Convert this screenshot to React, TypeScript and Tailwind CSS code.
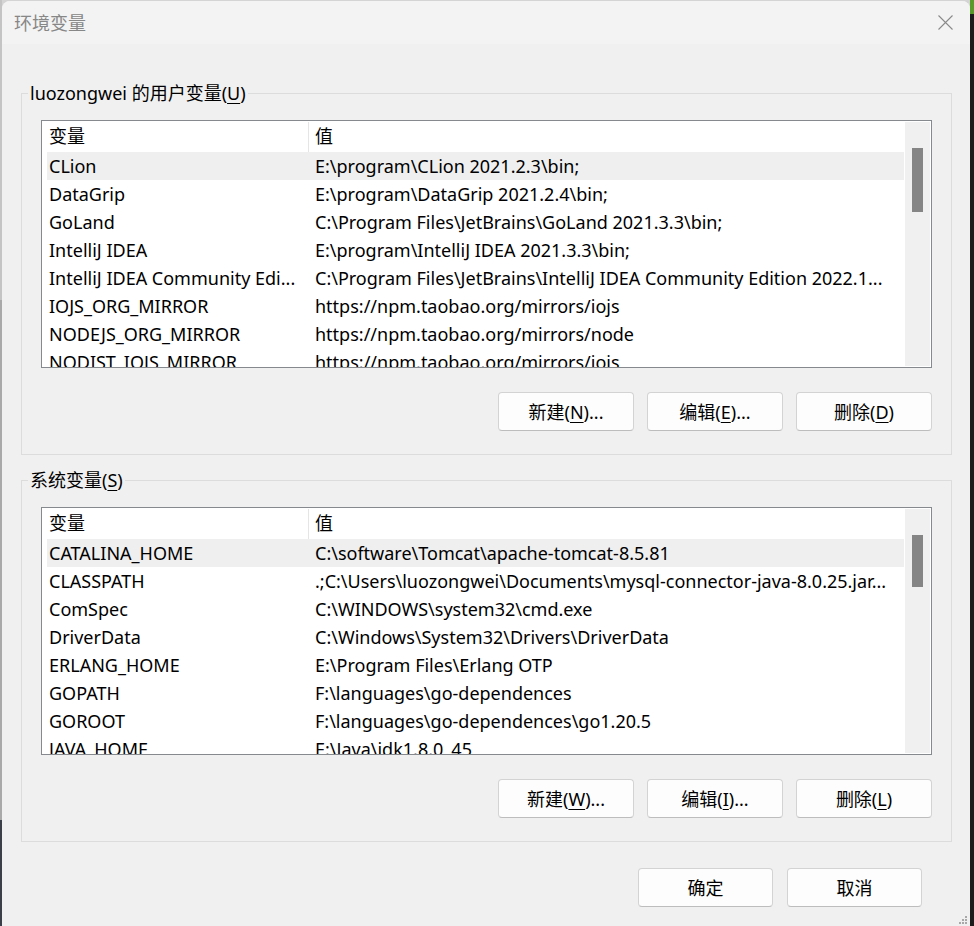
import React from "react";

const userRows: [string, string][] = [
  ["CLion", "E:\\program\\CLion 2021.2.3\\bin;"],
  ["DataGrip", "E:\\program\\DataGrip 2021.2.4\\bin;"],
  ["GoLand", "C:\\Program Files\\JetBrains\\GoLand 2021.3.3\\bin;"],
  ["IntelliJ IDEA", "E:\\program\\IntelliJ IDEA 2021.3.3\\bin;"],
  ["IntelliJ IDEA Community Edi...", "C:\\Program Files\\JetBrains\\IntelliJ IDEA Community Edition 2022.1..."],
  ["IOJS_ORG_MIRROR", "https://npm.taobao.org/mirrors/iojs"],
  ["NODEJS_ORG_MIRROR", "https://npm.taobao.org/mirrors/node"],
  ["NODIST_IOJS_MIRROR", "https://npm.taobao.org/mirrors/iojs"],
];

const sysRows: [string, string][] = [
  ["CATALINA_HOME", "C:\\software\\Tomcat\\apache-tomcat-8.5.81"],
  ["CLASSPATH", ".;C:\\Users\\luozongwei\\Documents\\mysql-connector-java-8.0.25.jar..."],
  ["ComSpec", "C:\\WINDOWS\\system32\\cmd.exe"],
  ["DriverData", "C:\\Windows\\System32\\Drivers\\DriverData"],
  ["ERLANG_HOME", "E:\\Program Files\\Erlang OTP"],
  ["GOPATH", "F:\\languages\\go-dependences"],
  ["GOROOT", "F:\\languages\\go-dependences\\go1.20.5"],
  ["JAVA_HOME", "E:\\Java\\jdk1.8.0_45"],
];

function Mn({ c }: { c: string }) {
  return <span className="underline underline-offset-[3px] decoration-1">{c}</span>;
}

function Btn({ children, className = "" }: { children: React.ReactNode; className?: string }) {
  return (
    <button
      className={`h-[39px] rounded-[4px] border border-[#d3d3d3] border-b-[#bdbdbd] bg-[#fdfdfd] text-[18px] leading-none text-black flex items-center justify-center ${className}`}
    >
      {children}
    </button>
  );
}

function ListView({ rows, thumbH }: { rows: [string, string][]; thumbH: string }) {
  return (
    <div className="h-[248px] border border-[#868a8f] bg-white flex overflow-hidden">
      <div className="w-[862px] pl-[5px] flex flex-col overflow-hidden">
        <div className="h-[31px] flex shrink-0">
          <div className="w-[261px] pl-[2px] flex items-center">变量</div>
          <div className="w-px bg-[#e5e5e5] mt-[1px]" />
          <div className="pl-[6px] flex items-center">值</div>
        </div>
        {rows.map((r, i) => (
          <div
            key={i}
            className={`h-[28px] shrink-0 flex items-center leading-[28px] ${i === 0 ? "bg-[#efefef]" : ""}`}
          >
            <div className="w-[262px] shrink-0 pl-[2px] whitespace-nowrap overflow-hidden">{r[0]}</div>
            <div className="pl-[6px] whitespace-nowrap overflow-hidden flex-1">{r[1]}</div>
          </div>
        ))}
      </div>
      <div className="w-[25px] my-[1px] ml-[1px] bg-[#f0f0f0] flex flex-col">
        <div className={`ml-[7px] mt-[26px] w-[11px] bg-[#858585] ${thumbH}`} />
      </div>
    </div>
  );
}

function Group({
  legend,
  rows,
  thumbH,
  buttons,
  className = "",
}: {
  legend: React.ReactNode;
  rows: [string, string][];
  thumbH: string;
  buttons: React.ReactNode[];
  className?: string;
}) {
  return (
    <fieldset className={`ml-[19px] w-[931px] min-w-0 border border-[#dcdcdc] pl-[6px] pr-[19px] pt-[15px] pb-[23px] ${className}`}>
      <legend className="px-[2px] text-[18px] leading-[23px] text-black">{legend}</legend>
      <div className="pl-[13px]">
        <ListView rows={rows} thumbH={thumbH} />
        <div className="mt-[24px] flex justify-end">
          <Btn className="w-[136px]">{buttons[0]}</Btn>
          <Btn className="w-[136px] ml-[13px]">{buttons[1]}</Btn>
          <Btn className="w-[136px] ml-[13px]">{buttons[2]}</Btn>
        </div>
      </div>
    </fieldset>
  );
}

export default function App() {
  return (
    <div className="w-[974px] h-[926px] overflow-hidden flex bg-[#d4d4d4] font-['Noto_Sans','Noto_Sans_CJK_SC',sans-serif] text-[18px] text-black">
      <div className="w-[2px] shrink-0 flex flex-col">
        <div className="h-[300px] bg-[#c4c4c4]" />
        <div className="h-[520px] bg-[#a9a9a9]" />
        <div className="flex-1 bg-[#3b4048]" />
      </div>
      <div className="relative mt-[1px] w-[968px] h-[925px] shrink-0 rounded-t-[8px] bg-[#f0f0f0] flex flex-col overflow-hidden">
        <div className="h-[43px] shrink-0 bg-[#f3f3f3] flex items-center pl-[12px]">
          <span className="text-[18px] text-[#878787] leading-none">环境变量</span>
          <div className="ml-auto mr-[17px] w-[15px] h-[15px]">
            <svg width="15" height="15" viewBox="0 0 15 15">
              <path d="M0.5 0.5 L14.5 14.5 M14.5 0.5 L0.5 14.5" stroke="#8a8a8a" strokeWidth="1.1" fill="none" />
            </svg>
          </div>
        </div>
        <Group
          className="mt-[38px]"
          legend={
            <>
              luozongwei 的用户变量(<Mn c="U" />)
            </>
          }
          rows={userRows}
          thumbH="h-[64px]"
          buttons={[
            <>新建(<Mn c="N" />)...</>,
            <>编辑(<Mn c="E" />)...</>,
            <>删除(<Mn c="D" />)</>,
          ]}
        />
        <Group
          className="mt-[14px]"
          legend={
            <>
              系统变量(<Mn c="S" />)
            </>
          }
          rows={sysRows}
          thumbH="h-[52px]"
          buttons={[
            <>新建(<Mn c="W" />)...</>,
            <>编辑(<Mn c="I" />)...</>,
            <>删除(<Mn c="L" />)</>,
          ]}
        />
        <div className="mt-[26px] mr-[48px] flex justify-end">
          <Btn className="w-[135px]">确定</Btn>
          <Btn className="w-[135px] ml-[14px]">取消</Btn>
        </div>
        <div className="absolute right-[2px] bottom-0">
          <svg width="11" height="10" viewBox="0 0 11 10">
            <rect x="8" y="0" width="2" height="2" fill="#a8a8a8" />
            <rect x="5" y="3" width="2" height="2" fill="#a8a8a8" />
            <rect x="8" y="3" width="2" height="2" fill="#a8a8a8" />
            <rect x="2" y="6" width="2" height="2" fill="#a8a8a8" />
            <rect x="5" y="6" width="2" height="2" fill="#a8a8a8" />
            <rect x="8" y="6" width="2" height="2" fill="#a8a8a8" />
          </svg>
        </div>
      </div>
      <div className="flex-1 flex flex-col">
        <div className="h-[14px] bg-[#5a9a2a]" />
        <div className="flex-1 bg-[#1c1c1c]" />
      </div>
    </div>
  );
}
